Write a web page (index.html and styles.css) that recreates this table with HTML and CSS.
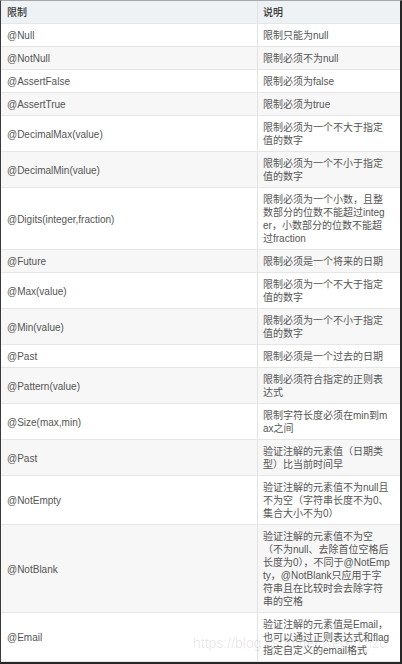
FILE: index.html
```
<!DOCTYPE html>
<html lang="zh-CN">
<head>
<meta charset="utf-8">
<title>校验注解</title>
<link rel="stylesheet" href="styles.css">
</head>
<body>
<div class="frame">
  <table class="rules">
    <colgroup><col class="c-name"><col class="c-desc"></colgroup>
    <thead>
      <tr><th class="name">限制</th><th class="desc">说明</th></tr>
    </thead>
    <tbody>
      <tr><td class="name">@Null</td><td class="desc">限制只能为null</td></tr>
      <tr><td class="name">@NotNull</td><td class="desc">限制必须不为null</td></tr>
      <tr><td class="name">@AssertFalse</td><td class="desc">限制必须为false</td></tr>
      <tr><td class="name">@AssertTrue</td><td class="desc">限制必须为true</td></tr>
      <tr><td class="name">@DecimalMax(value)</td><td class="desc">限制必须为一个不大于指定值的数字</td></tr>
      <tr><td class="name">@DecimalMin(value)</td><td class="desc">限制必须为一个不小于指定值的数字</td></tr>
      <tr><td class="name">@Digits(integer,fraction)</td><td class="desc">限制必须为一个小数，且整数部分的位数不能超过integer，小数部分的位数不能超过fraction</td></tr>
      <tr><td class="name">@Future</td><td class="desc">限制必须是一个将来的日期</td></tr>
      <tr><td class="name">@Max(value)</td><td class="desc">限制必须为一个不大于指定值的数字</td></tr>
      <tr><td class="name">@Min(value)</td><td class="desc">限制必须为一个不小于指定值的数字</td></tr>
      <tr><td class="name">@Past</td><td class="desc">限制必须是一个过去的日期</td></tr>
      <tr><td class="name">@Pattern(value)</td><td class="desc">限制必须符合指定的正则表达式</td></tr>
      <tr><td class="name">@Size(max,min)</td><td class="desc">限制字符长度必须在min到max之间</td></tr>
      <tr><td class="name">@Past</td><td class="desc">验证注解的元素值（日期类型）比当前时间早</td></tr>
      <tr><td class="name">@NotEmpty</td><td class="desc">验证注解的元素值不为null且不为空（字符串长度不为0、集合大小不为0）</td></tr>
      <tr><td class="name">@NotBlank</td><td class="desc">验证注解的元素值不为空（不为null、去除首位空格后长度为0），不同于@NotEmpty，@NotBlank只应用于字符串且在比较时会去除字符串的空格</td></tr>
      <tr><td class="name">@Email</td><td class="desc">验证注解的元素值是Email，也可以通过正则表达式和flag指定自定义的email格式</td></tr>
    </tbody>
  </table>
  <div class="watermark">https://blog.csdn.net/weixin_lzc</div>
</div>
</body>
</html>
```
FILE: styles.css
```
html, body {
  margin: 0;
  padding: 0;
  background: #ffffff;
}

.frame {
  position: relative;
  width: 402px;
  height: 664px;
  box-sizing: border-box;
  border-top: 1px solid #a8a8a8;
  border-left: 1px solid #3a3a3a;
  border-right: 2px solid #262626;
  border-bottom: 2px solid #262626;
  overflow: hidden;
  font-family: "Liberation Sans", "Noto Sans CJK SC", sans-serif;
  font-size: 10px;
  line-height: 13px;
  color: #555555;
}

.rules {
  width: 399px;
  table-layout: fixed;
  border-collapse: separate;
  border-spacing: 0;
}

.c-name { width: 256px; }
.c-desc { width: 143px; }

.rules th,
.rules td {
  box-sizing: border-box;
  padding: 5px 0 4px 0;
  border-bottom: 1px solid #e6e6e6;
  vertical-align: middle;
  text-align: left;
}

.rules th {
  background: #eef2f5;
  color: #333333;
  font-weight: 500;
}

.rules .name {
  padding-left: 6px;
  padding-right: 6px;
}

.rules .desc {
  border-left: 1px solid #e2e2e2;
  padding-left: 5px;
  padding-right: 10px;
  word-break: break-all;
}

.rules tbody tr:nth-child(even) td {
  background: #f7f7f7;
}

.watermark {
  position: absolute;
  left: 192px;
  top: 633px;
  font-size: 14px;
  line-height: 18px;
  color: rgba(0, 0, 0, 0.1);
  white-space: nowrap;
  pointer-events: none;
}
```
